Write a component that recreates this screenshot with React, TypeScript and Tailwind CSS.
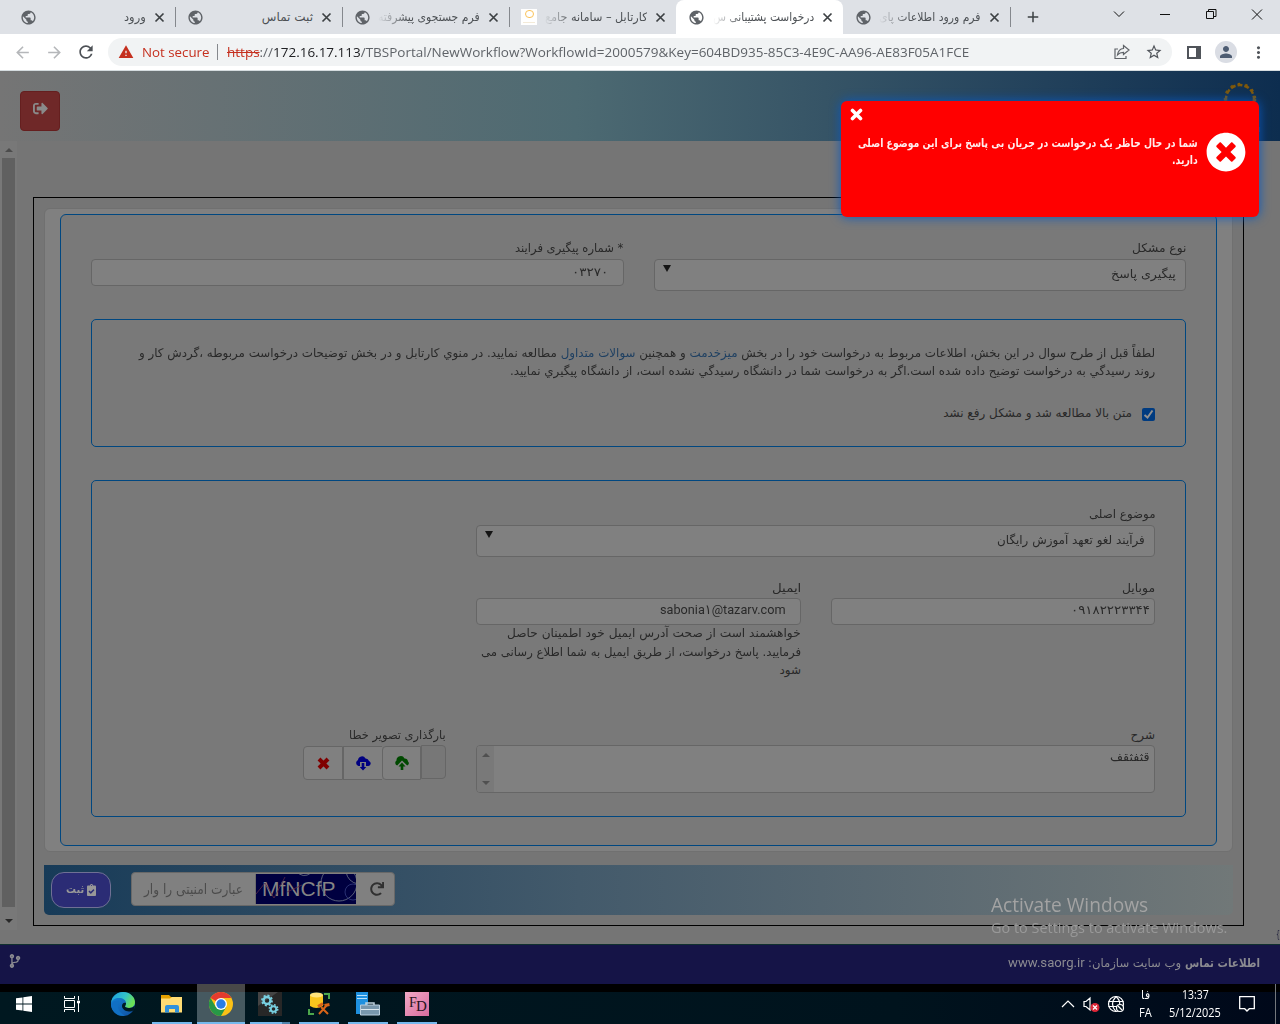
import React, { useLayoutEffect, useRef, useState } from "react";
import { MdPublic, MdArrowBack, MdArrowForward, MdRefresh, MdStarBorder, MdPerson, MdMoreVert, MdWarning, MdAdd } from "react-icons/md";
import { FaSignOutAlt, FaTimes, FaTimesCircle, FaRedo, FaClipboardCheck, FaCodeBranch } from "react-icons/fa";

/* A single line of text, condensed or widened to occupy exactly `w` pixels. */
function Fit({ w, rtl = true, className = "", children }: { w: number; rtl?: boolean; className?: string; children: React.ReactNode }) {
  const ref = useRef<HTMLSpanElement>(null);
  const [scale, setScale] = useState(1);
  useLayoutEffect(() => {
    if (ref.current) setScale(w / ref.current.offsetWidth);
  }, [w]);
  return (
    <span dir={rtl ? "rtl" : "ltr"} className={`flex shrink-0 ${className}`} style={{ width: w }}>
      <span
        ref={ref}
        className={`block shrink-0 whitespace-nowrap ${rtl ? "origin-right" : "origin-left"}`}
        style={{ transform: `scaleX(${scale})` }}
      >
        {children}
      </span>
    </span>
  );
}

const tabs = [
  { title: "ورود", w: 22 },
  { title: "ثبت تماس", w: 51 },
  { title: "فرم جستجوی پیشرفته", w: 102, fade: true },
  { title: "کارتابل – سامانه جامع", w: 103, fade: true, sun: true },
  { title: "درخواست پشتیبانی س", w: 101, fade: true, active: true },
  { title: "فرم ورود اطلاعات پای", w: 102, fade: true },
];

function TabStrip() {
  return (
    <div dir="ltr" className="flex h-[34px] bg-[#dee1e6] pl-2">
      {tabs.map((t, i) => (
        <div key={t.title} className={`relative flex h-[34px] w-[167px] items-center pl-3 ${t.active ? "rounded-t-lg bg-white" : ""}`}>
          {t.sun ? (
            <div className="flex h-4 w-4 flex-col items-center bg-white">
              <div className="mt-px h-[8px] w-[9px] rounded-full border-[1.5px] border-[#fbc35a]" />
              <div className="mt-1 h-px w-3 bg-[#f3ead8]" />
            </div>
          ) : (
            <MdPublic className="h-[17px] w-[17px] text-[#5f6368]" />
          )}
          <div className={`ml-auto mr-[8px] flex ${t.fade ? "[mask-image:linear-gradient(to_right,transparent,black_30px)]" : ""}`}>
            <Fit w={t.w} className="text-[12px] leading-[20px] text-[#4d5155]">{t.title}</Fit>
          </div>
          <svg className="mr-[10px] h-[11px] w-[11px]" viewBox="0 0 11 11" fill="none" stroke="#3c4043" strokeWidth="1.7">
            <path d="M1.500 1.500l8 8M9.500 1.500l-8 8" />
          </svg>
          {i !== 3 && i !== 4 && <div className="absolute -right-px top-[7px] h-5 w-px bg-[#85888d]" />}
        </div>
      ))}
      <MdAdd className="ml-[14px] mt-[8px] h-[18px] w-[18px] text-[#3c4043]" />
      <svg className="ml-auto h-[34px] w-[180px]" viewBox="1100 0 180 34" fill="none" stroke="#111" strokeWidth="1">
        <path d="M1114 11.5l5 5 5-5M1160 14.5h10M1206.5 11.5h7v7h-7zM1208.5 11.500v-2h7.500v7h-2.500M1252 9.500l10 10M1262 9.500l-10 10" />
      </svg>
    </div>
  );
}

function Toolbar() {
  return (
    <div dir="ltr" className="flex h-[37px] items-center border-b border-[#d5dcdf] bg-white pl-[13px]">
      <MdArrowBack className="h-[19px] w-[19px] text-[#b5b7ba]" />
      <MdArrowForward className="ml-[13px] h-[19px] w-[19px] text-[#b5b7ba]" />
      <MdRefresh className="ml-[12px] h-[20px] w-[20px] text-[#4d5156]" />
      <div className="ml-3 flex h-7 w-[1064px] items-center rounded-full bg-[#f1f3f4] pl-[10px] font-['Open_Sans',sans-serif] text-[13.500px]">
        <MdWarning className="h-4 w-4 text-[#c5301f]" />
        <Fit rtl={false} w={67} className="ml-2 mt-px text-[#c5301f]">Not secure</Fit>
        <div className="ml-[8px] h-4 w-px bg-[#85888d]" />
        <Fit rtl={false} w={742} className="ml-[9px] mt-px text-[#5f6368]">
          <span className="text-[#c5301f] line-through">https</span>://<span className="text-[#202124]">172.16.17.113</span>
          /TBSPortal/NewWorkflow?WorkflowId=2000579&amp;Key=604BD935-85C3-4E9C-AA96-AE83F05A1FCE
        </Fit>
        <svg className="ml-[145px] h-4 w-4" viewBox="0 0 16 16" fill="none" stroke="#5f6368" strokeWidth="1.2">
          <path d="M4 5H1v9.500h11V12M9.500 1.500l5.500 4.500-5.500 4.500V8.300c-3 0-4.500.7-6 2.500.5-3.500 2.500-6 6-6.300z" />
        </svg>
        <MdStarBorder className="ml-[15px] h-[18px] w-[18px] text-[#50545a]" />
      </div>
      <div className="ml-[15px] h-[13px] w-[14px] border-2 border-r-[5px] border-[#50545a]" />
      <div className="ml-[14px] flex h-[22px] w-[22px] items-center justify-center rounded-full bg-[#dadde4]">
        <MdPerson className="h-[18px] w-[18px] text-[#4d5c72]" />
      </div>
      <MdMoreVert className="ml-[12px] h-[19px] w-[19px] text-[#50545a]" />
    </div>
  );
}

function Label({ w, children }: { w: number; children: React.ReactNode }) {
  return <Fit w={w} className="h-[20px] text-[12px] leading-[20px]">{children}</Fit>;
}

function Select({ w, children }: { w: number; children: React.ReactNode }) {
  return (
    <div className="flex h-8 items-start justify-between rounded border border-[#666] bg-[#808080] pr-[9px]">
      <Fit w={w} className="mt-[4px] text-[12px] leading-[20px]">{children}</Fit>
      <div className="ml-[8px] mt-[5px] h-0 w-0 border-x-4 border-t-[7px] border-x-transparent border-t-[#151515]" />
    </div>
  );
}

function Cloud({ up }: { up?: boolean }) {
  return up ? (
    <svg className="h-4 w-4" viewBox="0 0 16 16">
      <path fill="#004900" d="M3.200 10.500A2.800 2.800 0 0 1 2.500 5.500a4.200 4.200 0 0 1 8-2A3.400 3.400 0 0 1 14 6.500a2.300 2.300 0 0 1-.8 4L8 5.500z" />
      <path fill="#004900" d="M8 7.500l3.500 4H9.300V15H6.700v-3.500H4.500z" />
    </svg>
  ) : (
    <svg className="h-4 w-4" viewBox="0 0 16 16">
      <path fill="#000080" d="M3.500 11A3.200 3.200 0 0 1 3 5a4 4 0 0 1 7.500-1.500A3.500 3.500 0 0 1 14 6a2.600 2.600 0 0 1-.5 5H11V7H5v4z" />
      <path fill="#000080" d="M6.700 8h2.600v4h2L8 15.500 4.700 12h2z" />
    </svg>
  );
}

function FormCard() {
  return (
    <div className="h-[644px] rounded-md border border-[#707070] bg-[#808080] px-[15px] pt-[5px]">
      <div className="h-[632px] rounded-md border border-[#004780] bg-[#797979] px-[30px] pt-[23px] text-[#292929]">
        <div className="grid h-[81px] grid-cols-2 gap-[30px]">
          <div>
            <Label w={54}>نوع مشکل</Label>
            <div className="mt-px"><Select w={65}>پیگیری پاسخ</Select></div>
          </div>
          <div>
            <Label w={108}>* شماره پیگیری فرایند</Label>
            <div className="mt-px flex h-[27px] rounded border border-[#666] bg-[#808080] pr-[14px]">
              <Fit w={36} className="mt-[2px] text-[12px] leading-5">۰۳۲۷۰</Fit>
            </div>
          </div>
        </div>
        <div className="h-[128px] rounded-[5px] border border-[#004780] px-[30px] pt-[24px] text-[12px]">
          <Fit w={1016} className="h-[18px] leading-[18px]">
            لطفاً قبل از طرح سوال در این بخش، اطلاعات مربوط به درخواست خود را در بخش <span className="text-[#1f4062]">میزخدمت</span> و همچنین <span className="text-[#1f4062]">سوالات متداول</span> مطالعه نمایید. در منوي کارتابل و در بخش توضیحات درخواست مربوطه ،گردش کار و
          </Fit>
          <Fit w={645} className="h-[18px] leading-[18px]">
            روند رسیدگي به درخواست توضیح داده شده است.اگر به درخواست شما در دانشگاه رسیدگي نشده است، از دانشگاه پیگیري نمایید.
          </Fit>
          <div className="mt-[23px] flex items-center gap-[10px]">
            <svg className="mt-[2px] h-[13px] w-[13px] rounded-[2px] bg-[#003b80]" viewBox="0 0 13 13" fill="none" stroke="#909090" strokeWidth="2">
              <path d="M2.500 7l3 2.500 5-7" />
            </svg>
            <Fit w={189} className="leading-[20px]">متن بالا مطالعه شد و مشکل رفع نشد</Fit>
          </div>
        </div>
        <div className="mt-[33px] h-[337px] rounded-[5px] border border-[#004780] px-[30px] pt-[23px]">
          <div className="w-[679px]">
            <Label w={67}>موضوع اصلی</Label>
            <div className="mt-px"><Select w={148}>فرآیند لغو تعهد آموزش رایگان</Select></div>
          </div>
          <div className="mt-[21px] flex h-[147px] gap-[30px]">
            <div className="w-[324px]">
              <Label w={33}>موبایل</Label>
              <div className="flex h-[27px] rounded border border-[#666] bg-[#808080] pr-1">
                <Fit w={79} className="mt-px text-[12px] leading-5">۰۹۱۸۲۲۲۳۳۴۴</Fit>
              </div>
            </div>
            <div className="w-[325px]">
              <Label w={29}>ایمیل</Label>
              <div className="flex h-[27px] rounded border border-[#666] bg-[#808080] pr-[14px]">
                <Fit rtl={false} w={126} className="mt-px font-[Roboto,'DejaVu_Sans',sans-serif] text-[13px] leading-5">sabonia۱@tazarv.com</Fit>
              </div>
              <Fit w={294} className="h-[18px] text-[12px] leading-[17px]">خواهشمند است از صحت آدرس ایمیل خود اطمینان حاصل</Fit>
              <Fit w={320} className="h-[19px] text-[12px] leading-[19px]">فرمایید. پاسخ درخواست، از طریق ایمیل به شما اطلاع رسانی می</Fit>
              <Fit w={22} className="h-[18px] text-[12px] leading-[17px]">شود</Fit>
            </div>
          </div>
          <div className="flex gap-[30px]">
            <div className="w-[679px]">
              <Label w={24}>شرح</Label>
              <div className="flex h-12 justify-between overflow-hidden rounded border border-[#666] bg-[#808080] pr-1">
                <Fit w={40} className="mt-px text-[12px] leading-5">قثفثقف</Fit>
                <div className="flex w-[17px] flex-col items-center justify-between bg-[#797979] py-[7px]">
                  <div className="border-x-4 border-b-4 border-x-transparent border-b-[#505050]" />
                  <div className="border-x-4 border-t-4 border-x-transparent border-t-[#505050]" />
                </div>
              </div>
            </div>
            <div>
              <Label w={97}>بارگذاری تصویر خطا</Label>
              <div className="flex">
                <div className="h-[34px] w-[25px] rounded-r border border-[#666] bg-[#777]" />
                <div className="mt-px flex h-[34px] w-[39px] items-center justify-center rounded-l border border-[#666] bg-[#808080]"><Cloud up /></div>
                <div className="mt-px flex h-[34px] w-[39px] items-center justify-center border-y border-l border-[#666] bg-[#808080]"><Cloud /></div>
                <div className="mt-px flex h-[34px] w-[40px] items-center justify-center rounded-l border border-[#666] bg-[#808080]">
                  <svg className="h-[13px] w-[13px]" viewBox="0 0 13 13" fill="none" stroke="#800000" strokeWidth="4"><path d="M2 2l9 9M11 2l-9 9" /></svg>
                </div>
              </div>
            </div>
          </div>
        </div>
      </div>
    </div>
  );
}

function SubmitBar() {
  return (
    <div dir="ltr" className="mt-[13px] flex h-[50px] rounded-b-[5px] bg-linear-to-r from-[#173b58] via-[#435a6b] via-45% to-[#717878] pl-[7px] pt-[7px]">
      <div className="flex h-9 w-[60px] items-center justify-center gap-[2px] rounded-[13px] border border-[#6f7094] bg-[#2b2c75] text-[#989898]">
        <Fit w={18} className="text-[11px] font-bold">ثبت</Fit>
        <FaClipboardCheck className="h-[12px] w-[9px]" />
      </div>
      <div className="ml-5 flex h-[34px] w-[264px] items-center rounded border border-[#686868] bg-[#808080]">
        <div className="flex w-[124px] justify-end border-r border-[#6c6c6c] pr-[12px]">
          <Fit w={99} className="text-[14px] leading-[30px] text-[#4c4c4c]">عبارت امنیتی را وار</Fit>
        </div>
        <div className="relative flex h-[30px] w-[100px] items-center overflow-hidden bg-[#000040] pl-[6px] font-['Liberation_Sans',sans-serif] text-[21px] text-[#858585]">
          <Fit rtl={false} w={74}>MfNCfP</Fit>
          <svg className="absolute inset-0 h-full w-full" viewBox="0 0 100 30" fill="none" stroke="#6d7688" strokeWidth=".8">
            <circle cx="83" cy="9" r="18" /><circle cx="97" cy="18" r="8" stroke="#333c80" />
            <path d="M40-3q7 8 15 2M90-2q2 10 12 12" /><path d="M0 20L9 9l9 15L29 3M31 18l15-7" stroke="#5c2948" />
          </svg>
        </div>
        <FaRedo className="ml-[14px] h-[14px] w-[14px] text-[#303030]" />
      </div>
    </div>
  );
}

function Logo() {
  return (
    <svg className="h-[60px] w-[40px]" viewBox="0 0 40 60" fill="none">
      <circle cx="20" cy="18" r="14" stroke="#80590a" strokeWidth="2.500" strokeDasharray="5 2" />
      <circle cx="20" cy="18" r="15.500" stroke="#80590a" strokeWidth="1.500" strokeDasharray="2.500 5.300" />
      <path d="M38 40v2M40 46v4h-3" stroke="#173c7c" strokeWidth="2" />
    </svg>
  );
}

function Toast() {
  return (
    <div dir="rtl" className="absolute left-[841px] top-[101px] flex h-[116px] w-[418px] rounded-md bg-[#f00] pr-[13px] pt-[31px] text-[#ffecec] shadow-[0_0_11px_#0858c0]">
      <FaTimesCircle className="h-10 w-10 text-white" />
      <div className="mr-2 mt-[3px] text-[11.500px] font-bold leading-[17px]">
        <Fit w={340}>شما در حال حاظر یک درخواست در جریان بی پاسخ برای این موضوع اصلی</Fit>
        <Fit w={26}>دارید.</Fit>
      </div>
      <svg className="absolute left-[9px] top-[7px] h-[13px] w-[13px]" viewBox="0 0 13 13" fill="none" stroke="#fff" strokeWidth="3.600" strokeLinecap="round">
        <path d="M2.500 2.500l8 8M10.500 2.500l-8 8" />
      </svg>
    </div>
  );
}

const apps = [
  <svg key="e" className="h-6 w-6" viewBox="0 0 24 24">
    <defs>
      <linearGradient id="edgeTop" x1="0" y1="0" x2="1" y2=".4"><stop stopColor="#1b9de2" /><stop offset=".6" stopColor="#33c3c9" /><stop offset="1" stopColor="#6bdf57" /></linearGradient>
      <linearGradient id="edgeLow" x1="0" y1="0" x2="1" y2="1"><stop stopColor="#1386da" /><stop offset="1" stopColor="#104e9f" /></linearGradient>
    </defs>
    <circle cx="12" cy="12" r="12" fill="url(#edgeLow)" />
    <path fill="url(#edgeTop)" d="M0 11C1 4 6 0 12 0c7 0 12 5 12 10 0 4-3 6-6 6-2 0-4-.7-4-1.500S15 13 15 11c0-3-3-5-7-5C4 6 1 8 0 11z" />
    <path fill="#001a24" d="M15 11c0 2-1 2.800-1 3.500S16 16 18 16c2 0 4.500-.8 6-2.500L23 18c-1.500 1.500-3 1.500-5 1.500-4 0-7-3-7-5.500 0-2 1.500-4 4-3z" />
    <path fill="#1170c4" d="M8 9c-3 6 0 12 6 14.500C7 25 1 20 0 13c1-4 5-5 8-4z" />
  </svg>,
  <svg key="f" className="h-6 w-6" viewBox="0 0 24 24">
    <path fill="#e5a100" d="M1 3h8l2 2h11v4H1z" /><path fill="#ffdc74" d="M1 6.500h9l2-1.500h10v15.500H1z" />
    <path fill="#2f91dc" d="M5 20.500V15q0-2 2-2h10q2 0 2 2v5.500h-4V17H9v3.500z" />
  </svg>,
  <svg key="c" className="h-6 w-6" viewBox="0 0 24 24">
    <circle cx="12" cy="12" r="12" fill="#fbc116" />
    <path fill="#e33b2e" d="M12 12L1.600 6A12 12 0 0 1 22.400 6H12z" />
    <path fill="#279847" d="M1.600 6A12 12 0 0 0 12 24l5.200-9L12 12l-5.200 3z" />
    <circle cx="12" cy="12" r="6" fill="#fff" /><circle cx="12" cy="12" r="4.700" fill="#2a7de8" />
  </svg>,
  <svg key="g" className="h-6 w-6" viewBox="0 0 24 24" fill="none" stroke="#78cfe0">
    <path d="M0 0h24v24H0z" fill="#272727" stroke="none" /><path d="M0 0h20L0 14z" fill="#444" stroke="none" />
    <circle cx="9" cy="8.500" r="3.500" strokeWidth="2.500" /><circle cx="9" cy="8.500" r="5" strokeWidth="1.800" strokeDasharray="2 1.900" />
    <circle cx="15.500" cy="17" r="2.800" strokeWidth="2" /><circle cx="15.500" cy="17" r="4.200" strokeWidth="1.600" strokeDasharray="1.700 1.600" />
  </svg>,
  <svg key="d" className="h-6 w-6" viewBox="0 0 24 24" fill="none">
    <path fill="#f8c51d" d="M3 3v11q6 4 13 0V3z" /><ellipse cx="9.500" cy="3" rx="6.500" ry="2.500" fill="#ffe47c" />
    <path stroke="#4ca64c" strokeWidth="2" d="M17 2h5v5M2 17v5h5" />
    <path stroke="#d86418" strokeWidth="2" d="M12 22l8-9M14 15l7 7" /><path stroke="#d86418" strokeWidth="3" d="M11 14.500l5-3M17.500 13.500l5-1" />
  </svg>,
  <svg key="s" className="h-6 w-6" viewBox="0 0 24 24">
    <path fill="#1e90df" d="M0 0h12v22H0z" /><path stroke="#b8e1fb" d="M1 3.500h10M1 6.500h10" />
    <path fill="none" stroke="#bfd2df" strokeWidth="1.500" d="M10 13v-2h8v2" /><path fill="#7897ad" stroke="#b9cddc" d="M4.500 13h19v10h-19z" /><path stroke="#dce8ef" d="M5 17.500h18" />
  </svg>,
  <div key="fd" className="relative h-6 w-6 bg-linear-to-br from-[#f0a9c6] to-[#d76c9e] font-['Liberation_Serif',serif] text-[#271320]">
    <span className="absolute left-1 top-0.5 text-[14px] leading-[18px]">F</span>
    <span className="absolute left-[11px] top-[5px] text-[15px] leading-[18px]">D</span>
  </div>,
];

function Taskbar() {
  return (
    <div dir="ltr" className="flex h-10 bg-[linear-gradient(to_bottom,#000_8px,transparent_8px),linear-gradient(to_right,#001820,#00131d_70%,#00081a)] text-white">
      <div className="flex w-12 items-center justify-center">
        <svg className="h-4 w-4" viewBox="0 0 16 16" fill="#fff"><path d="M0 2.300L6.500 1.400v6.200H0zM7.300 1.300L16 0v7.600H7.300zM0 8.400h6.500v6.200L0 13.700zM7.300 8.400H16V16l-8.700-1.200z" /></svg>
      </div>
      <div className="mr-[3px] flex w-12 items-center justify-center">
        <svg className="h-4 w-4" viewBox="0 0 16 16" fill="none" stroke="#fff"><path d="M.5 0v2.500h10V0M.5 4.500h10v7H.5zM.5 16v-2.500h10V16M14.500 0v4M14.500 7v9" /><path fill="#fff" d="M13.500 5h2v2h-2z" /></svg>
      </div>
      {apps.map((icon, i) => (
        <div key={i} className={`relative mr-px flex w-12 justify-center pt-2 ${i === 2 ? "bg-[linear-gradient(to_bottom,#484848_8px,#465960_8px)]" : ""}`}>
          {icon}
          {i > 0 && <div className={`absolute bottom-0 h-0.5 bg-[#76b9ed] ${i === 2 ? "inset-x-0" : "inset-x-1"}`} />}
          {i === 3 && <div className="absolute bottom-0 right-1 h-0.5 w-2 bg-[#4f83ab]" />}
        </div>
      ))}
      <div className="ml-auto flex items-center font-['Open_Sans',sans-serif] text-[12px]">
        <svg className="h-5 w-[66px]" viewBox="0 0 66 20" fill="none" stroke="#fff" strokeWidth="1.200">
          <path d="M1 13l6-6 6 6M23 7.500v5h2l4 3.500V4l-4 3.500z" />
          <circle cx="34" cy="13.500" r="4.500" fill="#dc2637" stroke="none" /><path d="M32 11.500l4 4M36 11.500l-4 4" />
          <circle cx="55" cy="10" r="7.500" /><path d="M47.500 7.500h15M47.500 12.500h15M55 2.500q-7 7.500 0 15M55 2.500q4 3.500 3.700 7.500" />
          <circle cx="59" cy="14" r="3.500" fill="#00101a" /><path d="M57 12l4 4" />
        </svg>
        <div className="ml-[11px] flex w-[14px] flex-col items-center leading-[18px]">
          <Fit w={9}>فا</Fit>
          <Fit rtl={false} w={13}>FA</Fit>
        </div>
        <div className="ml-[17px] flex w-[52px] flex-col items-center leading-[18px]">
          <Fit rtl={false} w={27}>13:37</Fit>
          <Fit rtl={false} w={52}>5/12/2025</Fit>
        </div>
        <svg className="ml-[18px] h-4 w-4" viewBox="0 0 16 16" fill="none" stroke="#fff" strokeWidth="1.300"><path d="M.7.7h14.600v12h-5L8 15l-2.300-2.300h-5z" /></svg>
        <div className="ml-[20px] mr-1 h-10 w-px bg-[#73777c]" />
      </div>
    </div>
  );
}

export default function App() {
  return (
    <div className="relative h-[1024px] w-[1280px] overflow-hidden bg-[#757575] font-['DejaVu_Sans',sans-serif]">
      <TabStrip />
      <Toolbar />
      <header dir="ltr" className="flex h-[70px] items-start justify-between bg-linear-to-r from-[#757575] via-[#4d6a72] via-45% to-[#0d2d4f] pl-5 pr-5">
        <div className="mt-5 flex h-10 w-10 justify-center rounded border border-[#651f1f] bg-[#6f2828] pt-[9px]">
          <FaSignOutAlt className="h-[15px] w-[15px] text-[#8a8a8a]" />
        </div>
        <div className="mt-[10px] flex gap-5">
          <Fit w={45} className="mt-[17px] text-[11px] text-[#7c8790]">سازمان امور</Fit>
          <Logo />
        </div>
      </header>
      <div dir="ltr" className="flex h-[803px]">
        <div className="flex h-[789px] w-[17px] flex-col items-center bg-[#787878] pt-[7px]">
          <div className="border-x-4 border-b-4 border-x-transparent border-b-[#4c4c4c]" />
          <div className="mt-[6px] h-[749px] w-[13px] bg-[#606060]" />
          <div className="mt-[12px] border-x-4 border-t-4 border-x-transparent border-t-[#282828]" />
        </div>
        <main dir="rtl" className="ml-4 mt-14 h-[729px] w-[1211px] border border-black px-[10px] pt-[10px]">
          <FormCard />
          <SubmitBar />
        </main>
        <Fit rtl={false} w={4} className="ml-auto mt-[786px] h-4 text-[11px] leading-4 text-[#25253f]">{"{"}</Fit>
      </div>
      <footer dir="rtl" className="flex h-10 justify-between border-t border-[#10302f] bg-[#151447] px-[20px] text-[12px] text-[#8b8b91]">
        <div className="flex pt-[8px] leading-5">
          <Fit w={75} className="font-bold">اطلاعات تماس</Fit>
          <Fit w={93} className="mr-1">وب سایت سازمان:</Fit>
          <Fit rtl={false} w={77} className="mr-[3px] font-[Roboto,sans-serif] text-[13px]">www.saorg.ir</Fit>
        </div>
        <FaCodeBranch className="-ml-[11px] mt-[9px] h-[14px] w-[12px]" />
      </footer>
      <Taskbar />
      <Toast />
      <div dir="ltr" className="absolute left-[991px] top-[892px] font-['Open_Sans',sans-serif] text-[#a3a3a3]">
        <Fit rtl={false} w={157} className="text-[20px] leading-[26px]">Activate Windows</Fit>
        <Fit rtl={false} w={236} className="text-[14px] leading-[20px] text-[#989898]">Go to Settings to activate Windows.</Fit>
      </div>
    </div>
  );
}
